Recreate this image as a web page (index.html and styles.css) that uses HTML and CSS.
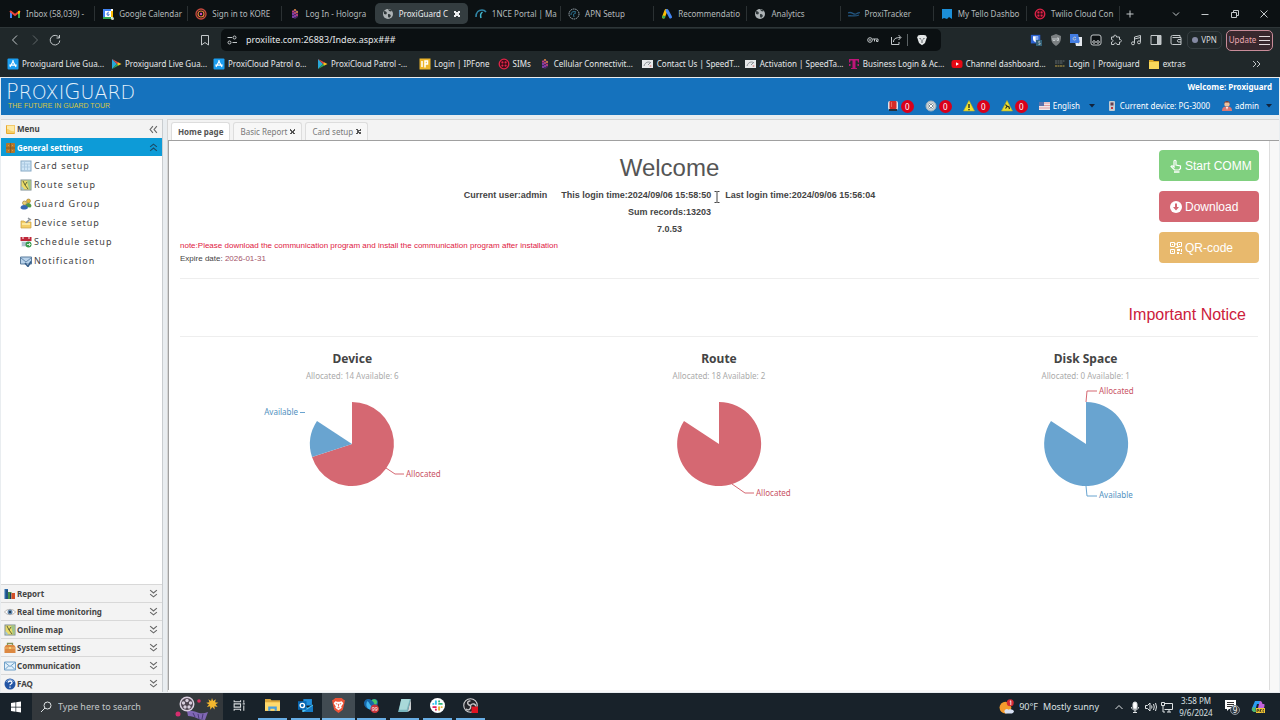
FILE: index.html
```html
<!DOCTYPE html>
<html lang="en">
<head>
<meta charset="utf-8">
<title>ProxiGuard</title>
<link rel="stylesheet" href="styles.css">
</head>
<body>
<svg class="defs" aria-hidden="true">
  <symbol id="gmail" viewBox="0 0 12 12"><path d="M1 10V3h2v7z" fill="#4285f4"/><path d="M9 10V3h2v7z" fill="#34a853"/><path d="M1 3l5 4 5-4" fill="none" stroke="#ea4335" stroke-width="2"/><path d="M9 3h2v2L9 6.500z" fill="#fbbc04"/></symbol>
  <symbol id="gcal" viewBox="0 0 12 12"><path fill="#fff" d="M1 1h10v10H1z"/><path fill="#4285f4" d="M1 1h8v2H3v6H1z"/><path fill="#fbbc04" d="M9 3h2v6H9z"/><path fill="#34a853" d="M1 9h8v2H1z"/><path d="M6.800 4.300c-2-.3-2.300 3-.8 3.200 1.500 0 1.300-2-.6-1.600" fill="none" stroke="#2b6bd8"/><circle cx="10.500" cy="10.500" r="1.500" fill="#c7d8c7"/></symbol>
  <symbol id="kore" viewBox="0 0 12 12"><circle cx="6" cy="6" r="5" fill="none" stroke="#c8493e" stroke-width="1.300"/><circle cx="6" cy="6" r="3" fill="none" stroke="#e8833b" stroke-width="1.200"/><circle cx="6" cy="6" r="1.200" fill="#d14dbb"/></symbol>
  <symbol id="holo" viewBox="0 0 12 12"><path d="M3 3l3-2 3 2v6l-3 2-3-2z" fill="#4b2860"/><g fill="#d0447c"><circle cx="4" cy="3.500" r="1"/><circle cx="6" cy="5" r="1"/><circle cx="8" cy="7" r="1"/></g><g fill="#db8f3b"><circle cx="6" cy="2" r="1"/><circle cx="8" cy="4" r="1"/></g><g fill="#8d46bc"><circle cx="4" cy="6" r="1"/><circle cx="6" cy="8" r="1"/><circle cx="4" cy="9" r="1"/></g></symbol>
  <symbol id="globe" viewBox="0 0 12 12"><circle cx="6" cy="6" r="5" fill="#aeb4b6"/><path d="M2 3l2 .5 1 1.500-1 1.500-2-.5M6 1l1 2 2 .5 1-1M6 6l2 .3 1 1.700-2 2-1-1.500z" fill="#30383a"/></symbol>
  <symbol id="arc" viewBox="0 0 12 12"><path d="M1 9C1 4 4 2 7 2c2 0 3 .7 4 2" fill="none" stroke="#3185a5" stroke-width="1.600"/><path d="M6 10c-1-3 0-5 1.500-6" fill="none" stroke="#43b7ce" stroke-width="1.500"/></symbol>
  <symbol id="apn" viewBox="0 0 12 12"><circle cx="6" cy="6" r="5" fill="none" stroke="#a0aeb6" stroke-dasharray="1.500 .7"/><path d="M3 7c0-3 2-4 5-3M6 9c-1-3 0-4 2-4" fill="none" stroke="#317a9b"/></symbol>
  <symbol id="gads" viewBox="0 0 12 12"><path d="M5 2.500L2.500 9" stroke="#fbbc04" stroke-width="3" stroke-linecap="round"/><path d="M6 2.500L9.500 9" stroke="#4285f4" stroke-width="3" stroke-linecap="round"/><circle cx="2.700" cy="9" r="1.600" fill="#34a853"/></symbol>
  <symbol id="track" viewBox="0 0 12 12"><path d="M0 5c4-2 5 2 8 1s3-2 4-1M0 8c3-1 6 1 11-1" fill="none" stroke="#22547e" stroke-width="1.300"/></symbol>
  <symbol id="tello" viewBox="0 0 12 12"><path d="M1 1h10v10L8 9l-2 2-3-1-2 1z" fill="#1c8fd8"/></symbol>
  <symbol id="twilio" viewBox="0 0 12 12"><circle cx="6" cy="6" r="4.800" fill="#3b0b18" stroke="#e02448" stroke-width="1.300"/><g fill="#e02448"><circle cx="4.400" cy="4.400" r="1.100"/><circle cx="7.600" cy="4.400" r="1.100"/><circle cx="4.400" cy="7.600" r="1.100"/><circle cx="7.600" cy="7.600" r="1.100"/></g></symbol>
  <symbol id="appstore" viewBox="0 0 12 12"><rect x=".5" y=".5" width="11" height="11" rx="1" fill="#1b9df0"/><path d="M6.500 2.500L3 9M5.500 2.500L9 9M2.300 7.200h7.400" stroke="#fff" stroke-width="1.200" fill="none"/></symbol>
  <symbol id="play" viewBox="0 0 12 12"><path d="M2 1v10l5-5z" fill="#28a7d8"/><path d="M2 1l7 3.700L7 6z" fill="#e34a43"/><path d="M2 11l7-3.700L7 6z" fill="#36a853"/><path d="M8.500 4.400L11.500 6l-3 1.600L7 6z" fill="#fbc21b"/></symbol>
  <symbol id="ipf" viewBox="0 0 12 12"><path fill="#edb52b" d="M.5.5h11v11H.5z"/><path d="M3 3v6M6 9.500V3h2.500v3H6" stroke="#fff" stroke-width="1.500" fill="none"/></symbol>
  <symbol id="speed" viewBox="0 0 12 12"><path fill="#e7e9ea" d="M0 2h11v8H0z"/><path d="M2 8c1-4 5-5 7-3M6 7l3-3" stroke="#8a9095" fill="none"/><circle cx="8.500" cy="8" r="1" fill="#d99"/></symbol>
  <symbol id="tmob" viewBox="0 0 12 12"><path d="M1 1h10v3.500h-1L9.500 2.500h-2V10H9v1H3v-1h1.500V2.500h-2L2 4.500H1zM1 6h1.500v2H1zM9.500 6H11v2H9.500z" fill="#bd1678"/></symbol>
  <symbol id="yt" viewBox="0 0 12 12"><rect x=".5" y="2" width="11" height="8" rx="2.500" fill="#e50914"/><path d="M5 4.300v3.400L8 6z" fill="#fff"/></symbol>
  <symbol id="proxi" viewBox="0 0 12 12"><path d="M1 3h10M1 5h8" stroke="#626a6c" stroke-dasharray="2 .5"/><path d="M1 8h10" stroke="#8a7a3d" stroke-width="1.500" stroke-dasharray="2 .5"/></symbol>
  <symbol id="folder" viewBox="0 0 12 12"><path d="M1 2h4l1 1h5v8H1z" fill="#dba928"/><path d="M1 4h10v7H1z" fill="#f8d75a"/></symbol>
  <symbol id="grid" viewBox="0 0 12 12"><rect x="1" y="1" width="10" height="10" fill="#cfe5f6" stroke="#86a9c5"/><path d="M2 4h8M4.500 2v8M7.500 4v6M2 7h8" stroke="#a4c4de" stroke-width=".8"/></symbol>
  <symbol id="map" viewBox="0 0 12 12"><rect x="1" y="1" width="10" height="10" fill="#eadb68" stroke="#7d8d91"/><path d="M7 1.500h3.500v9H9z" fill="#9dc58a"/><path d="M1.500 7l3 3.500h-3z" fill="#98c4e3"/><path d="M3 2l2 4 3 4M5 6l2-3" fill="none" stroke="#5d6439"/></symbol>
  <symbol id="group" viewBox="0 0 12 12"><circle cx="8.500" cy="3" r="2" fill="#e1b73b" stroke="#9b7831" stroke-width=".6"/><path d="M5 9c0-5 6-5 6.500-1l-1 1.500z" fill="#529944"/><circle cx="4.500" cy="5" r="2" fill="#ecd276" stroke="#937333" stroke-width=".6"/><path d="M.5 10c0-4 7-4 7.500 0-2 2-6 2-7.500 0z" fill="#3566b2"/></symbol>
  <symbol id="dev" viewBox="0 0 12 12"><path d="M1 4h3l1 1h6v6H1z" fill="#f3ce67" stroke="#c99f40" stroke-width=".7"/><path d="M6 6l4-4M8 1l3 2" stroke="#8b9299" stroke-width="1.500"/><path d="M2 7h8" stroke="#fff1b2" stroke-width="1.500"/></symbol>
  <symbol id="sched" viewBox="0 0 12 12"><path d="M1 2h10v9H1z" fill="#e8eef2"/><path d="M.5 1h11v4H.5z" fill="#bf2739"/><path d="M3 0v3M9 0v3" stroke="#fff"/><path d="M2 7h5M2 9h4" stroke="#7896b3"/><circle cx="8.500" cy="8.500" r="3" fill="#3b9d51"/><path d="M7 8.500h3M9 7l1.500 1.500L9 10" stroke="#fff" fill="none" stroke-width=".8"/></symbol>
  <symbol id="notif" viewBox="0 0 12 12"><path d="M.5 2h11v7H.5z" fill="#b8d2ea" stroke="#5b7c9d"/><path d="M1 3l5 4 5-4" fill="none" stroke="#668baf"/><path d="M5 8l3 3.500 3-5" fill="none" stroke="#355e8b" stroke-width="1.500"/></symbol>
  <symbol id="menu" viewBox="0 0 12 12"><rect x="2" y="2" width="9" height="9" rx="1" fill="#e9a92c"/><rect x="3" y="2.500" width="7.500" height="7" fill="#fdeaa8"/><path d="M3 6c3 0 3 3 7.500 2v2H3z" fill="#f6cf68"/></symbol>
  <symbol id="cabinet" viewBox="0 0 12 12"><rect x="2" y="1" width="9" height="10" rx="1" fill="#b47627"/><path d="M6.500 1v10M2 6h9" stroke="#7e551f" stroke-width=".8"/><path d="M4 3.500h1M8 3.500h1M4 8.500h1M8 8.500h1" stroke="#d69a48"/></symbol>
  <symbol id="bars" viewBox="0 0 12 12"><path d="M.5 1h3.500v10H.5z" fill="#2b69a6"/><path d="M4 4h3.500v7H4z" fill="#458d46"/><path d="M7.500 5H11v6H7.500z" fill="#d34e28"/><path d="M3 2v9M6.500 5v6" stroke="#183c61"/></symbol>
  <symbol id="eye" viewBox="0 0 12 12"><path d="M.5 6C3 2.500 9 2.500 11.500 6 9 9.500 3 9.500 .5 6z" fill="#fff" stroke="#a8a29c" stroke-width=".8"/><circle cx="6" cy="6" r="2.500" fill="#648bb0"/><circle cx="6" cy="6" r="1.100" fill="#152a3c"/></symbol>
  <symbol id="case" viewBox="0 0 12 12"><path d="M3.500 4V1.500h5V4" fill="none" stroke="#849056" stroke-width="1.300"/><path d="M.5 5l1.500-2h8l1.500 2v6H.5z" fill="#dc8841"/><path d="M1 6h10" stroke="#efbc75"/><path d="M5 5h2v2H5z" fill="#f4d46d"/></symbol>
  <symbol id="mail" viewBox="0 0 12 12"><path d="M.5 2h11v8H.5z" fill="#e1f0fb" stroke="#6fa0c8"/><path d="M1 2.500l5 4 5-4M1 9.500L4.500 6M11 9.500L7.500 6" fill="none" stroke="#6fa0c8"/></symbol>
  <symbol id="help" viewBox="0 0 12 12"><circle cx="6" cy="6" r="5.500" fill="#2355a4"/><path d="M2 4c1-3 7-3 8 0" fill="none" stroke="#88afe1"/><path d="M4.200 4.500C4.200 2.500 8 2.500 8 4.500S6 5.500 6 7.300M6 8.500v1.300" fill="none" stroke="#fff" stroke-width="1.300"/></symbol>
  <symbol id="down2" viewBox="0 0 8 8"><path d="M1 1l3 2.500L7 1M1 4.500L4 7l3-2.500" fill="none" stroke="#666"/></symbol>
  <symbol id="caret" viewBox="0 0 6 4"><path d="M0 0h6L3 3.500z" fill="#11233c"/></symbol>
  <symbol id="bell" viewBox="0 0 12 12"><rect x="1" y="1" width="10" height="9" rx="2" fill="#dce3ea"/><rect x="2.500" y="1" width="7" height="8" rx="1" fill="#d42b26"/><path d="M2 9h8v2H2z" fill="#27303a"/><path d="M4.500 2v5" stroke="#e8665c"/></symbol>
  <symbol id="cross" viewBox="0 0 12 12"><circle cx="6" cy="6" r="5" fill="#c9d2d6" stroke="#a0b0ba"/><path d="M4 4l4 4M8 4L4 8" stroke="#6d7f89" stroke-width="2"/><path d="M4 4l4 4M8 4L4 8" stroke="#fff"/></symbol>
  <symbol id="warn" viewBox="0 0 12 12"><path d="M6 .5l5.500 10.500H.5z" fill="#f3e331" stroke="#b9ad29" stroke-width=".6"/><path d="M6 4v4M6 9v1.300" stroke="#292f22" stroke-width="1.400"/></symbol>
  <symbol id="fall" viewBox="0 0 12 12"><path d="M6 .5l5.500 10.500H.5z" fill="#e9de31" stroke="#b9ad29" stroke-width=".6"/><path d="M4.500 4.500l1.500 2-1.500 2M6 6l2 1 .5 2" stroke="#292f22" stroke-width="1.200" fill="none"/></symbol>
  <symbol id="flag" viewBox="0 0 12 12"><path fill="#f1e6e9" d="M0 2h11v8H0z"/><path d="M0 3h11M0 5.500h11M0 8h11" stroke="#e09ba0"/><path fill="#5a73ad" d="M0 2h5v4H0z"/></symbol>
  <symbol id="reader" viewBox="0 0 12 12"><rect x="3" y="1" width="6" height="10" rx="1" fill="#c4cbd2"/><path d="M4.500 2.500h3v3h-3z" fill="#683f50"/><path d="M5 7h2v2H5z" fill="#c0373c"/></symbol>
  <symbol id="person" viewBox="0 0 12 12"><circle cx="6" cy="4" r="2.700" fill="#efc09c"/><path d="M3 4C2.500 0 9.500 0 9 4L8 2.500H4z" fill="#6a3939"/><path d="M1 11c0-4 2.500-4.500 5-4.500s5 .5 5 4.500z" fill="#dc7771"/><path d="M5 7h2l-1 3z" fill="#fff"/></symbol>
</svg>

<header class="browser">
  <div class="tabstrip">
    <nav class="tabs" aria-label="Browser tabs">
      <button class="tab"><svg><use href="#gmail"/></svg><span>Inbox (58,039) -</span></button>
      <button class="tab"><svg><use href="#gcal"/></svg><span>Google Calendar</span></button>
      <button class="tab"><svg><use href="#kore"/></svg><span>Sign in to KORE</span></button>
      <button class="tab"><svg><use href="#holo"/></svg><span>Log In - Hologra</span></button>
      <button class="tab active"><svg><use href="#globe"/></svg><span>ProxiGuard C</span><b class="x"></b></button>
      <button class="tab"><svg><use href="#arc"/></svg><span>1NCE Portal | Ma</span></button>
      <button class="tab"><svg><use href="#apn"/></svg><span>APN Setup</span></button>
      <button class="tab"><svg><use href="#gads"/></svg><span>Recommendatio</span></button>
      <button class="tab"><svg><use href="#globe"/></svg><span>Analytics</span></button>
      <button class="tab"><svg><use href="#track"/></svg><span>ProxiTracker</span></button>
      <button class="tab"><svg><use href="#tello"/></svg><span>My Tello Dashbo</span></button>
      <button class="tab"><svg><use href="#twilio"/></svg><span>Twilio Cloud Con</span></button>
    </nav>
    <button class="plain newtab" aria-label="New tab"><svg viewBox="0 0 12 12"><path d="M6 2.500v7M2.500 6h7"/></svg></button>
    <div class="wincontrols">
      <button class="plain" aria-label="Search tabs"><svg viewBox="0 0 12 12"><path d="M3 4.500l3 3 3-3"/></svg></button>
      <button class="plain" aria-label="Minimize"><svg viewBox="0 0 12 12"><path d="M2.500 6.500h7"/></svg></button>
      <button class="plain" aria-label="Restore"><svg viewBox="0 0 12 12"><path d="M2.500 4.500h5v5h-5zM4.500 4.500v-2h5v5h-2"/></svg></button>
      <button class="plain" aria-label="Close"><svg viewBox="0 0 12 12"><path d="M2.500 2.500l7 7M9.500 2.500l-7 7"/></svg></button>
    </div>
  </div>

  <div class="toolbar">
    <div class="navbtns">
      <button class="plain" aria-label="Back"><svg viewBox="0 0 12 12"><path d="M8 1.500L3.500 6 8 10.500"/></svg></button>
      <button class="plain dim" aria-label="Forward"><svg viewBox="0 0 12 12"><path d="M4 1.500L8.500 6 4 10.500"/></svg></button>
      <button class="plain" aria-label="Reload"><svg viewBox="0 0 12 12"><path d="M10 3.500A4.800 4.800 0 1 0 10.800 6.500M10.500 1v3h-3"/></svg></button>
    </div>
    <button class="plain bookmark-btn" aria-label="Bookmark"><svg viewBox="0 0 12 12"><path d="M2.500 1.500h7v9.500L6 8.500 2.500 11z"/></svg></button>
    <div class="address">
      <svg viewBox="0 0 12 12"><path d="M1.500 3.500H6M6.500 8.500H11"/><circle cx="8.500" cy="3.500" r="1.500"/><circle cx="3.500" cy="8.500" r="1.500"/></svg>
      <input type="text" aria-label="Address" value="proxilite.com:26883/Index.aspx###">
      <button class="plain key" aria-label="Passwords"><svg viewBox="0 0 12 12"><circle cx="3" cy="6" r="2.300"/><circle cx="3" cy="6" r=".5"/><path d="M5.500 5H11v2.500H9.500V6M7.500 5v2.500"/></svg></button>
      <button class="plain share" aria-label="Share"><svg viewBox="0 0 12 12"><path d="M1.500 3v7.500H9V8M3.500 8c0-3 2-4.500 7-4.500M8.500 1l2.500 2.500L8.500 6"/></svg></button>
      <button class="plain" aria-label="Shields"><svg viewBox="0 0 12 12"><path d="M2 1.500l2-.5h4l2 .5.8 2L9 9l-3 2.300L3 9 1.200 3.500z" fill="#e4e7e8" stroke="none"/><path d="M3.500 4.500l1.500.5M8.500 4.500L7 5M6 5.500v1.500M5 8h2" stroke="#30383c" stroke-width=".8"/></svg></button>
    </div>
    <div class="extensions">
      <button class="plain" aria-label="Bitwarden"><svg viewBox="0 0 14 14"><path d="M1 1h11v10H1z" fill="#2d62cf" stroke="none"/><path d="M3.500 2.500h6v3c0 2-1 3-3 4-2-1-3-2-3-4z" fill="#fff" stroke="none"/><path d="M6.500 2.500h3v3c0 2-1 3-3 4z" fill="#85aaf0" stroke="none"/><path d="M7 7h7v7H7z" fill="#326076" stroke="none"/><path d="M11.800 9c-1-1-2.500 0-1.500 1s2.500.5 1.500 2h-2"/></svg></button>
      <button class="plain" aria-label="uBlock"><svg viewBox="0 0 12 12"><path d="M6 0l5 2c0 5-1 7.500-5 10C2 9.500 1 7 1 2z" fill="#7b8082" stroke="none"/><path d="M3 4v2.500h2V4M7 4v2.500h1.500V4z"/></svg></button>
      <button class="plain" aria-label="Translate"><svg viewBox="0 0 12 12"><path d="M4 3h8v9H6z" fill="#e4e8ed" stroke="none"/><path d="M0 0h8l2 9H0z" fill="#437de2" stroke="none"/><path d="M6 3.500C3 2 2 6 4.500 6 6 6 6 5 5 5M8 10l2-2"/></svg></button>
      <button class="plain" aria-label="Tampermonkey"><svg viewBox="0 0 12 12"><rect x="1" y="1" width="10" height="10" rx="2" fill="#0c1113"/><circle cx="4" cy="8" r="1.300"/><circle cx="8" cy="8" r="1.300"/></svg></button>
      <button class="plain" aria-label="Extensions"><svg viewBox="0 0 12 12"><path d="M1.500 3H4c-1-2.500 3-2.500 2.500 0h3v2.500C12 5 12 8.500 9.500 8v2.500H7c0-2-3-2-3 0H1.500V8c2 0 2-2.500 0-2.500z"/></svg></button>
      <button class="plain" aria-label="Music"><svg viewBox="0 0 12 12"><path d="M4.500 9V3l6-1.500v6.300M4.500 5l6-1.500"/><circle cx="3" cy="9.300" r="1.500"/><circle cx="9" cy="8.300" r="1.500"/></svg></button>
      <button class="plain" aria-label="Sidebar"><svg viewBox="0 0 12 12"><path d="M1 1.500h10v9H1z"/><path d="M7.500 2H10.500v8h-3z" fill="#b9bec0"/></svg></button>
      <button class="plain wallet" aria-label="Wallet"><svg viewBox="0 0 12 12"><path d="M10 3.500v-2H2.500q-1.500 0-1.500 1.500v6q0 1.500 1.500 1.500H11v-7H2.500M11 5.500H8q-1.300 1.300 0 2.500h3"/></svg></button>
      <button class="vpn"><i></i>VPN</button>
      <button class="update">Update<i></i></button>
    </div>
  </div>

  <nav class="bookmarks" aria-label="Bookmarks">
    <a class="wide" href="#"><svg><use href="#appstore"/></svg>Proxiguard Live Gua...</a>
    <a class="wide" href="#"><svg><use href="#play"/></svg>Proxiguard Live Gua...</a>
    <a class="wide" href="#"><svg><use href="#appstore"/></svg>ProxiCloud Patrol o...</a>
    <a class="wide" href="#"><svg><use href="#play"/></svg>ProxiCloud Patrol -...</a>
    <a href="#"><svg><use href="#ipf"/></svg>Login | IPFone</a>
    <a href="#"><svg><use href="#twilio"/></svg>SIMs</a>
    <a class="wide" href="#"><svg><use href="#holo"/></svg>Cellular Connectivit...</a>
    <a class="wide" href="#"><svg><use href="#speed"/></svg>Contact Us | SpeedT...</a>
    <a class="wide" href="#"><svg><use href="#speed"/></svg>Activation | SpeedTa...</a>
    <a class="wide" href="#"><svg><use href="#tmob"/></svg>Business Login &amp; Ac...</a>
    <a class="wide" href="#"><svg><use href="#yt"/></svg>Channel dashboard...</a>
    <a href="#"><svg><use href="#proxi"/></svg>Login | Proxiguard</a>
    <a href="#"><svg><use href="#folder"/></svg>extras</a>
    <button class="plain more" aria-label="More bookmarks"><svg viewBox="0 0 12 12"><path d="M3 3l3 3-3 3M7 3l3 3-3 3"/></svg></button>
  </nav>
</header>

<div class="app">
  <header class="banner">
    <div class="brand"><div class="name">P<span>ROXI</span>G<span>UARD</span></div><div class="slogan">THE FUTURE IN GUARD TOUR</div></div>
    <div class="account">
      <strong>Welcome: Proxiguard</strong>
      <div class="status">
        <span class="alert"><svg><use href="#bell"/></svg><b>0</b></span>
        <span class="alert"><svg><use href="#cross"/></svg><b>0</b></span>
        <span class="alert"><svg><use href="#warn"/></svg><b>0</b></span>
        <span class="alert"><svg><use href="#fall"/></svg><b>0</b></span>
        <label class="lang"><svg><use href="#flag"/></svg><select aria-label="Language"><option>English</option></select><svg class="caret"><use href="#caret"/></svg></label>
        <span class="device"><svg><use href="#reader"/></svg>Current device: PG-3000</span>
        <button class="user"><svg><use href="#person"/></svg>admin<svg class="caret"><use href="#caret"/></svg></button>
      </div>
    </div>
  </header>

  <div class="workspace">
    <aside class="sidebar">
      <div class="row head"><svg><use href="#menu"/></svg><span>Menu</span><button class="fold" aria-label="Collapse menu"><svg viewBox="0 0 8 8"><path d="M3.500 1L1 4l2.500 3M7 1L4.500 4 7 7" fill="none" stroke="#666"/></svg></button></div>
      <button class="row selected"><svg><use href="#cabinet"/></svg><span>General settings</span><svg class="chev" viewBox="0 0 8 8"><path d="M1 3.500L4 1l3 2.500M1 7l3-2.500L7 7" fill="none" stroke="#1b4a66"/></svg></button>
      <nav class="links">
        <a href="#"><svg><use href="#grid"/></svg>Card setup</a>
        <a href="#"><svg><use href="#map"/></svg>Route setup</a>
        <a href="#"><svg><use href="#group"/></svg>Guard Group</a>
        <a href="#"><svg><use href="#dev"/></svg>Device setup</a>
        <a href="#"><svg><use href="#sched"/></svg>Schedule setup</a>
        <a href="#"><svg><use href="#notif"/></svg>Notification</a>
      </nav>
      <button class="row"><svg><use href="#bars"/></svg><span>Report</span><svg class="chev"><use href="#down2"/></svg></button>
      <button class="row"><svg><use href="#eye"/></svg><span>Real time monitoring</span><svg class="chev"><use href="#down2"/></svg></button>
      <button class="row"><svg><use href="#map"/></svg><span>Online map</span><svg class="chev"><use href="#down2"/></svg></button>
      <button class="row"><svg><use href="#case"/></svg><span>System settings</span><svg class="chev"><use href="#down2"/></svg></button>
      <button class="row"><svg><use href="#mail"/></svg><span>Communication</span><svg class="chev"><use href="#down2"/></svg></button>
      <button class="row"><svg><use href="#help"/></svg><span>FAQ</span><svg class="chev"><use href="#down2"/></svg></button>
    </aside>

    <section class="center">
      <div class="pagetabs">
        <button class="current">Home page</button>
        <button>Basic Report<i class="x"></i></button>
        <button>Card setup<i class="x"></i></button>
      </div>
      <main class="page">
        <div class="intro">
          <div class="summary">
            <h1>Welcome</h1>
            <div class="facts"><span>Current user:admin</span><span>This login time:2024/09/06 15:58:50</span><span>Last login time:2024/09/06 15:56:04</span>
              <svg class="pointer" viewBox="0 0 6 12"><path d="M.5.500h2l.5.500.500-.500h2M3 1v10M.500 11.500h2l.500-.500.500.500h2" fill="none" stroke="#444"/></svg></div>
            <div class="facts">Sum records:13203</div>
            <div class="facts">7.0.53</div>
            <p class="note">note:Please download the communication program and install the communication program after installation</p>
            <p class="expire">Expire date: <span>2026-01-31</span></p>
          </div>
          <div class="actions">
            <button class="green"><svg viewBox="0 0 14 14"><path d="M5 8V2q1-1.500 2 0v4l4.500 1v2.500L10 11H5.500L2 7.500Q3 6 5 8z" fill="none" stroke="#fff" stroke-width="1.200"/><path d="M5 13h5.500" stroke="#fff" stroke-width="1.500"/></svg>Start COMM</button>
            <button class="red"><svg viewBox="0 0 14 14"><circle cx="7" cy="7" r="6" fill="#fff"/><path d="M6 3.500h2V7h2l-3 3.500L4 7h2z" fill="#d46772"/></svg>Download</button>
            <button class="amber"><svg viewBox="0 0 14 14"><path d="M1.500 1.500h4v4h-4zM8.500 1.500h4v4h-4zM1.500 8.500h4v4h-4z" fill="none" stroke="#fff"/><path d="M3 3h1v1H3zM10 3h1v1h-1zM3 10h1v1H3zM8 8h3v2H8zM12 8h1v3h-1zM8 11h2v2H8zM11 12h2v1h-2zM6.500 2h1v2h-1zM6.500 6h3v1h-3z" fill="#fff"/></svg>QR-code</button>
          </div>
        </div>
        <div class="notice">Important Notice</div>
        <div class="charts">
          <figure>
            <figcaption><h2>Device</h2><p>Allocated: 14 Available: 6</p></figcaption>
            <svg viewBox="0 0 200 124" role="img" aria-label="Device allocation">
              <path d="M100 60V18A42 42 0 1 1 60 73z" fill="#d56872"/><path d="M100 60L60 73A42 42 0 0 1 65 37z" fill="#69a4d0"/>
              <path d="M134 84l9 6h9" class="lr"/><path d="M48 28.500h5" class="lb"/>
              <text x="154" y="93" class="tr">Allocated</text><text x="46" y="31" text-anchor="end" class="tb">Available</text>
            </svg>
          </figure>
          <figure>
            <figcaption><h2>Route</h2><p>Allocated: 18 Available: 2</p></figcaption>
            <svg viewBox="0 0 200 124" role="img" aria-label="Route allocation">
              <path d="M100 60V18A42 42 0 1 1 65 37z" fill="#d56872"/>
              <path d="M113 100l13 9h9" class="lr"/><text x="137" y="112" class="tr">Allocated</text>
            </svg>
          </figure>
          <figure>
            <figcaption><h2>Disk Space</h2><p>Allocated: 0 Available: 1</p></figcaption>
            <svg viewBox="0 0 200 124" role="img" aria-label="Disk space allocation">
              <path d="M100 60V18A42 42 0 1 1 65 37z" fill="#69a4d0"/>
              <path d="M100 18l1-11h10" class="lr"/><path d="M100 102l1 10h10" class="lb"/>
              <text x="113" y="10" class="tr">Allocated</text><text x="113" y="114" class="tb">Available</text>
            </svg>
          </figure>
        </div>
      </main>
    </section>
  </div>
</div>

<footer class="taskbar">
  <button class="start" aria-label="Start"><svg viewBox="0 0 12 12"><path d="M1 2l4.500-.7v4.400H1zM6.200 1.200L11 .5v5.200H6.200zM1 6.400h4.500v4.300L1 10zM6.200 6.400H11v5.100l-4.800-.7z" fill="#fff"/></svg></button>
  <label class="search">
    <svg class="lens" viewBox="0 0 12 12"><circle cx="7.500" cy="4.500" r="3.500"/><path d="M5 7l-4 4"/></svg>
    <input type="search" aria-label="Search" placeholder="Type here to search">
    <svg class="film" viewBox="0 0 48 26"><path d="M12 17c9-2 11 5 21 1l-3 8c-8 0-9-4-17-4z" fill="#8067b4"/><path d="M18 19l2 4M23 20l1 5M28 20l-1 5" stroke="#493876"/><circle cx="12" cy="10" r="7.500" fill="#d8cddd"/><circle cx="12" cy="10" r="6" fill="#4d424f"/><g fill="#d8cddd"><circle cx="12" cy="6.500" r="1.700"/><circle cx="8.500" cy="9" r="1.700"/><circle cx="15.500" cy="9" r="1.700"/><circle cx="10" cy="13" r="1.700"/><circle cx="14" cy="13" r="1.700"/></g><path d="M37 4l1.200 3 2.600-1.700-.7 3 3.300.4-2.800 1.600 2 2.600-3.200-.6.300 3.300-2.400-2.500-2 2.600-.2-3.400-3.300.6 2.200-2.500-2.800-1.600 3.200-.5-1-3 2.700 1.800z" fill="#f4b72e"/><circle cx="24" cy="7" r="1.800" fill="#d62d5e"/><circle cx="3" cy="20" r="2.500" fill="#d62d6e"/></svg>
  </label>
  <nav class="apps" aria-label="Applications">
    <button aria-label="Task view"><svg viewBox="0 0 14 14"><path d="M2 2v1.500h6V2M2 12v-1.500h6V12M2 5.500h6v3H2zM11 2v2.500M11 7v5M10 5.500h2" fill="none" stroke="#d8dcde"/></svg></button>
    <button class="run" aria-label="File Explorer"><svg viewBox="0 0 14 14"><path d="M0 1h5l1 1h8v10H0z" fill="#dca73b"/><path d="M0 4h14v8H0z" fill="#ffd96d"/><path d="M3 12V8h8v4H9v-2H5v2z" fill="#4a9edc"/></svg></button>
    <button class="run" aria-label="Outlook"><svg viewBox="0 0 14 14"><path d="M5 1h8v6H5z" fill="#1f8fdd"/><path d="M4 6l5 3 5-3v7H4z" fill="#50c3f3"/><path d="M5 13l9-6v6z" fill="#157bc5"/><rect y="3" width="8" height="8" fill="#0868b3"/><circle cx="4" cy="7" r="2" fill="none" stroke="#fff" stroke-width="1.300"/></svg></button>
    <button class="run focus" aria-label="Brave"><svg viewBox="0 0 14 14"><path d="M4 0h6l1.500 1.500L13 2l-.5 3-1.500 6-4 3-4-3L1.500 5 1 2l1.500-.5z" fill="#ee5337"/><path d="M4 3l2 .5h2L10 3l1.500 2L9.500 8l.5 1.200L7 11.500 4 9.200 4.500 8 2.500 5z" fill="#fff"/><path d="M4.500 5.200l1.500.5M9.500 5.200L8 5.700M7 5.500V8M6 9h2" stroke="#ee5337" stroke-width=".8" fill="none"/></svg></button>
    <button class="run" aria-label="Edge"><svg viewBox="0 0 14 14"><path d="M0 5c0-4 5-5 7-3 2-2 6-1 6 2 0 5-4 7-7 7-4-1-6-3-6-6z" fill="#1766aa"/><path d="M7 2c3-2 6 0 5 3-1 2-3 1-3-1z" fill="#46c66a"/><path d="M3 3c2 0 2 4 5 5l-2 3C3 10 1 7 3 3z" fill="#42b5ed"/><circle cx="10" cy="10" r="4" fill="#c8343b"/><text x="10" y="12" text-anchor="middle" class="tiny">99</text></svg></button>
    <button class="run" aria-label="Notepad"><svg viewBox="0 0 14 14"><path d="M4 1h9l-3 12H1z" fill="#79b5bd"/><path d="M4 1h8L9 11H2z" fill="#a9d9d9"/><path d="M13 1v10l-3 2z" fill="#d5d8d9"/></svg></button>
    <button class="run" aria-label="Slack"><svg viewBox="0 0 14 14"><circle cx="7" cy="7" r="7" fill="#fff"/><g fill="none" stroke-width="1.800" stroke-linecap="round"><path d="M5.500 3v2.500M3 5.500h.2" stroke="#36c5f0"/><path d="M8.500 5.500H11M8.500 3v.2" stroke="#2eb67d"/><path d="M8.500 8.500V11M11 8.500h-.2" stroke="#ecb22e"/><path d="M5.500 8.500H3M5.500 11v-.2" stroke="#e01e5a"/></g></svg></button>
    <button class="run" aria-label="OBS"><svg viewBox="0 0 14 14"><circle cx="7" cy="7" r="6.300" fill="#23252a" stroke="#d0d0d2"/><path d="M7 7C3 6 4 2 7 3M7 7c2-3 5-1 5 1M7 7c1 4-3 5-4 3" fill="none" stroke="#c8c8ca" stroke-width="1.300"/><path d="M8 8h6v6H8z" fill="#e11421"/></svg></button>
  </nav>
  <div class="tray">
    <span class="weather"><svg viewBox="0 0 14 14"><circle cx="6" cy="8" r="5.500" fill="#f59b2c"/><path d="M5 12c0-3 3-3 4-2 2-1 5 0 5 2q-1 1.500-2 1.500H6z" fill="#d8e1f3"/><circle cx="10.500" cy="3.500" r="3.300" fill="#d42a32"/><path d="M10 2.500l1-.8v4" stroke="#fff" fill="none" stroke-width=".8"/></svg><span>90°F</span><span>Mostly sunny</span></span>
    <svg class="line" viewBox="0 0 12 12"><path d="M2.500 8L6 4.500 9.500 8"/></svg>
    <svg class="line" viewBox="0 0 12 12"><rect x="4" y="1" width="4" height="7" rx="2" fill="#fff"/><path d="M2.500 6c0 4 7 4 7 0M6 9v2M4 11.500h4"/></svg>
    <svg class="line" viewBox="0 0 12 12"><path d="M.5 4.500h2L5 2v8L2.500 7.500h-2zM6.500 4.500q1 1.500 0 3M8.500 3q1.500 3 0 6M10.500 2q2 4 0 8"/></svg>
    <svg class="line" viewBox="0 0 12 12"><path d="M4 2.500h7.500v6H3.500M6 11h4M8 8.500V11M.5 1.500h3v3h-3zM2 5v6h2"/></svg>
    <time><span>3:58 PM</span><span>9/6/2024</span></time>
    <svg class="msg" viewBox="0 0 16 16"><path d="M1 1h11v9H5l-2 2v-2H1z" fill="#fff"/><path d="M3 3.500h7M3 5.500h7M3 7.500h5" stroke="#333"/><circle cx="11" cy="11" r="4.500" fill="#303941" stroke="#8b959c"/><text x="11" y="14" text-anchor="middle" class="nine">9</text></svg>
    <svg class="pilot" viewBox="0 0 14 14"><path d="M4 1h5l1 3H6L4 11H2Q0 11 1 8z" fill="#2b9df3"/><path d="M9 1q2 0 2.500 3H13q1 0 0 4l-1 4H6l2-8z" fill="#c363dd"/><path d="M1 8l3-1 1 5H3Q1 12 1 8z" fill="#50bd6b"/><path d="M5 8h9v5H5z" fill="#f0c635"/><path d="M6 12V9.500h1.500V11H6M9 12V9.500h1.500L9 11l1.500 1M13 9.500h-1V12h1" fill="none" stroke="#29231a" stroke-width=".7"/></svg>
  </div>
</footer>
</body>
</html>
```
FILE: styles.css
```css
* { box-sizing: border-box; }
body { margin: 0; height: 100vh; display: flex; flex-direction: column; overflow: hidden; font-family: "Noto Sans", "Open Sans", sans-serif; font-size: 8px; line-height: 12px; color: #444; background: #eef2f4; }
button, input, select { font: inherit; color: inherit; border: 0; background: none; padding: 0; margin: 0; outline: 0; }
a { color: inherit; text-decoration: none; }
h1, h2, p, figure { margin: 0; }
svg { display: block; flex: none; width: 12px; height: 12px; }
.defs { position: absolute; width: 0; height: 0; }

.browser { flex: none; background: #20282a; color: #d9dddf; }
.tabstrip { display: flex; align-items: center; height: 27px; padding-left: 2px; background: #0c1113; }
.tabs { flex: 1; min-width: 0; display: flex; }
.tab { flex: 1 1 0; min-width: 0; height: 21px; display: flex; align-items: center; gap: 5px; padding: 0 8px 0 7px; border-radius: 5px; color: #b4babc; position: relative; }
.tab span { flex: 1; white-space: nowrap; text-align: left; }
.tab::after { content: ""; position: absolute; right: 0; top: 3px; height: 15px; width: 1px; background: #2b3133; }
.tab.active { background: #343d40; color: #eceeef; }
.tab.active::after, .tab:nth-child(4)::after { background: none; }
.x { flex: none; width: 6px; height: 6px; background: linear-gradient(45deg, transparent 40%, currentColor 40% 60%, transparent 60%), linear-gradient(-45deg, transparent 40%, currentColor 40% 60%, transparent 60%); }
.plain { display: flex; align-items: center; justify-content: center; }
.plain svg, .address svg { fill: none; stroke: #c3c8ca; stroke-width: 1; }
.newtab { flex: none; width: 20px; }
.wincontrols { flex: none; width: 140px; display: flex; justify-content: space-between; padding: 0 10px 0 30px; }

.toolbar { height: 25px; display: flex; align-items: center; border-top: 1px solid #2e3638; padding-right: 7px; }
.navbtns { display: flex; gap: 8px; padding-left: 9px; }
.dim { opacity: .4; }
.bookmark-btn { margin-left: 138px; }
.address { flex: 1; display: flex; align-items: center; height: 22px; margin-left: 10px; padding: 0 13px 0 5px; border-radius: 5px; background: #0b1012; gap: 8px; }
.address input { flex: 1; min-width: 0; font-size: 9px; color: #e4e7e9; }
.address .share { padding: 0 5px 0 3px; border-right: 1px solid #5b6264; }
.extensions { display: flex; align-items: center; gap: 8px; margin-left: 89px; }
.wallet { margin-right: -3px; }
.vpn, .update { display: flex; align-items: center; justify-content: center; height: 18px; border: 1px solid #353d40; border-radius: 5px; }
.vpn { width: 35px; gap: 3px; margin-right: -4px; }
.vpn i { width: 6px; height: 6px; border-radius: 50%; background: #858aa3; }
.update { width: 47px; height: 21px; gap: 3px; border-color: #c88c99; color: #e8a7b1; background: #38272d; }
.update i { width: 11px; height: 9px; border: solid #e4dadd; border-width: 1px 0; background: linear-gradient(#e4dadd, #e4dadd) 0 3px / 100% 1px no-repeat; }

.bookmarks { height: 25px; display: flex; align-items: center; gap: 8px; padding: 0 18px 2px 7px; white-space: nowrap; }
.bookmarks a { display: flex; align-items: center; gap: 3px; color: #e6e9ea; }
.bookmarks .wide { width: 95px; }
.more { margin-left: auto; }

.app { flex: 1; min-height: 0; display: flex; flex-direction: column; padding: 1px; background: #e9edf0; }
.banner { flex: none; height: 37px; display: flex; justify-content: space-between; background: #1572bd; color: #fff; }
.brand { padding: 4px 5px; }
.name { font-family: "DejaVu Sans", sans-serif; font-weight: 200; font-size: 21px; line-height: 20px; color: #e4f1fb; }
.name span { font-size: 19px; }
.slogan { font: 7px/8px "Liberation Sans", sans-serif; color: #d5c840; padding-left: 2px; }
.account { display: flex; flex-direction: column; align-items: flex-end; padding: 3px 7px 0; }
.status { display: flex; align-items: center; height: 14px; margin-top: 6px; }
.alert { display: flex; align-items: center; gap: 2px; width: 38px; }
.alert b { width: 13px; height: 13px; border-radius: 50%; background: #d9001b; text-align: center; line-height: 13px; font-weight: 400; }
.lang, .device, .user { display: flex; align-items: center; gap: 2px; }
.lang select { appearance: none; width: 29px; }
.lang, .device { margin-right: 11px; }
.caret { width: 6px; height: 4px; margin-left: 5px; }

.workspace { flex: 1; min-height: 0; display: flex; gap: 4px; padding-top: 4px; }
.sidebar { width: 162px; flex: none; display: flex; flex-direction: column; background: #fff; border-right: 1px solid #c9cdd0; }
.row { flex: none; height: 18px; display: flex; align-items: center; gap: 1px; padding: 0 4px 0 3px; border-top: 1px solid #d8d8d8; background: #f3f3f3; color: #444; font-weight: 700; text-align: left; }
.row span { flex: 1; }
.row.head { height: 19px; }
.fold svg, .chev { width: 9px; height: 9px; }
.row.selected { background: #0d9bd7; border-color: #0d9bd7; color: #fff; }
.links { flex: 1; display: flex; flex-direction: column; }
.links a { display: flex; align-items: center; gap: 2px; height: 19px; padding-left: 19px; font-size: 9px; letter-spacing: 1px; color: #444; }

.center { flex: 1; min-width: 0; display: flex; flex-direction: column; border-top: 1px solid #d5d5d5; border-left: 1px solid #d5d5d5; background: #f8f8f8; }
.pagetabs { flex: none; height: 21px; display: flex; align-items: flex-end; gap: 3px; padding-left: 3px; background: #f3f3f3; border-bottom: 1px solid #a0a0a0; }
.pagetabs button { height: 18px; display: flex; align-items: center; gap: 3px; padding: 0 6px; border: 1px solid #ddd; border-bottom: 0; border-radius: 3px 3px 0 0; background: #f7f7f7; color: #777; }
.pagetabs .x { width: 5px; height: 5px; color: #555; }
.pagetabs .current { background: #fff; font-weight: 700; color: #555; }
.page { flex: 1; min-height: 0; margin: 0 9px 2px 0; border-left: 1px solid #a0a0a0; border-right: 1px solid #ddd; background: #fff; }
.intro { display: flex; margin: 0 10px 0 11px; height: 138px; border-bottom: 1px solid #eee; font-family: "Liberation Sans", sans-serif; }
.summary { flex: 1; padding-top: 11px; }
.intro h1 { font-weight: 400; font-size: 24px; line-height: 32px; text-align: center; color: #555; }
.facts { display: flex; justify-content: center; gap: 14px; font-size: 9px; font-weight: 700; line-height: 17px; color: #444; position: relative; }
h1 + .facts { margin-top: 3px; }
.pointer { position: absolute; left: 50%; margin-left: 44px; top: 4px; width: 6px; height: 12px; }
.note, .expire { line-height: 13px; }
.note { color: #e0203f; margin-top: 1px; }
.expire span { color: #a35369; }
.actions { padding-top: 9px; display: flex; flex-direction: column; gap: 10px; width: 100px; }
.actions button { height: 31px; display: flex; align-items: center; gap: 2px; padding-left: 10px; border-radius: 4px; color: #fff; font-size: 12px; white-space: nowrap; }
.actions svg { width: 14px; height: 14px; }
.green { background: #80d07f; }
.red { background: #d46772; }
.amber { background: #e8b96d; }
.notice { margin: 0 11px; height: 58px; padding: 26px 12px 0; border-bottom: 1px solid #eee; text-align: right; font: 16px/20px "Liberation Sans", sans-serif; color: #cc203c; }
.charts { display: grid; grid-template-columns: repeat(3, 1fr); padding-top: 13px; }
figure { display: flex; flex-direction: column; align-items: center; text-align: center; }
h2 { font-size: 12px; line-height: 18px; color: #444; }
figcaption p { line-height: 16px; color: #aaa; }
figure svg { width: 200px; height: 124px; overflow: visible; }
.lr, .lb { fill: none; stroke: #d56872; }
.lb { stroke: #69a4d0; }
.tr { fill: #c95466; }
.tb { fill: #5191c0; }

.taskbar { flex: none; height: 27px; display: flex; background: #18222a; color: #dce0e2; font-size: 9px; }
.start { width: 32px; display: flex; align-items: center; justify-content: center; }
.search { width: 191px; display: flex; align-items: center; background: #33383c; padding-left: 8px; }
.search input { flex: 1; min-width: 0; padding-left: 6px; }
.search input::placeholder { color: #c2c6c8; }
.lens, .line { fill: none; stroke: #dfe3e5; }
.film { width: 48px; height: 26px; }
.apps { display: flex; }
.apps button { width: 33px; display: flex; align-items: center; justify-content: center; border-bottom: 2px solid transparent; }
.apps svg { width: 15px; height: 15px; }
.apps .run { border-image: linear-gradient(90deg, transparent 10%, #68aee5 10% 90%, transparent 90%) 1; }
.apps .focus { background: #414b52; border-image: none; border-color: #76b9ed; }
.tiny { font-size: 5px; fill: #fff; }
.nine { font-size: 8px; fill: #fff; }
.tray { margin-left: auto; display: flex; align-items: center; gap: 4px; padding-right: 15px; }
.weather { display: flex; align-items: center; gap: 5px; margin-right: 10px; }
.weather svg { width: 15px; height: 15px; }
time { display: flex; flex-direction: column; align-items: center; width: 38px; font-size: 8px; }
.msg { width: 16px; height: 16px; margin-left: 5px; }
.pilot { width: 14px; height: 14px; margin-left: 7px; }
```
